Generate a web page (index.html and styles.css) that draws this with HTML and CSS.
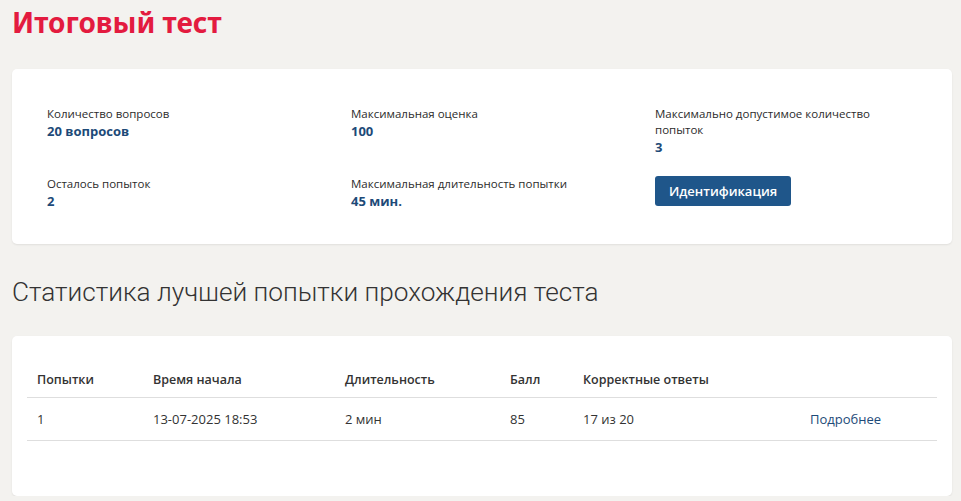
FILE: index.html
```html
<!DOCTYPE html>
<html lang="ru">
<head>
  <meta charset="UTF-8">
  <meta name="viewport" content="width=device-width, initial-scale=1.0">
  <title>Итоговый тест</title>
  <link rel="stylesheet" href="styles.css">
</head>
<body>
  <h1 class="page-title">Итоговый тест</h1>

  <div class="card info-card">
    <div class="info-grid">
      <div class="info-item">
        <div class="info-label">Количество вопросов</div>
        <div class="info-value">20 вопросов</div>
      </div>
      <div class="info-item">
        <div class="info-label">Максимальная оценка</div>
        <div class="info-value">100</div>
      </div>
      <div class="info-item">
        <div class="info-label">Максимально допустимое количество попыток</div>
        <div class="info-value">3</div>
      </div>
      <div class="info-item">
        <div class="info-label">Осталось попыток</div>
        <div class="info-value">2</div>
      </div>
      <div class="info-item">
        <div class="info-label">Максимальная длительность попытки</div>
        <div class="info-value">45 мин.</div>
      </div>
      <div class="info-item">
        <button class="btn">Идентификация</button>
      </div>
    </div>
  </div>

  <h2 class="section-title">Статистика лучшей попытки прохождения теста</h2>

  <div class="card stats-card">
    <table class="stats">
      <thead>
        <tr>
          <th class="col-num">Попытки</th>
          <th class="col-start">Время начала</th>
          <th class="col-dur">Длительность</th>
          <th class="col-score">Балл</th>
          <th class="col-correct">Корректные ответы</th>
          <th></th>
        </tr>
      </thead>
      <tbody>
        <tr>
          <td>1</td>
          <td>13-07-2025 18:53</td>
          <td>2 мин</td>
          <td>85</td>
          <td>17 из 20</td>
          <td><a href="#" class="more-link">Подробнее</a></td>
        </tr>
      </tbody>
    </table>
  </div>
</body>
</html>
```

FILE: styles.css
```css
:root {
  --page-bg: #f3f2ef;
  --red: #e31b3f;
  --blue: #1f568a;
  --navy: #1d4a78;
  --text: #333333;
  --line: #dedede;
}

body {
  margin: 0;
  padding: 0 9px 0 12px;
  background-color: var(--page-bg);
  font-family: "Open Sans", "Noto Sans", Arial, sans-serif;
  font-size: 13px;
  color: var(--text);
}

.page-title {
  margin: 0;
  padding-top: 4px;
  height: 65px;
  font-family: "Noto Sans", Arial, sans-serif;
  font-size: 28px;
  font-weight: 700;
  line-height: 36px;
  color: var(--red);
}

.card {
  background-color: #ffffff;
  border-radius: 5px;
  box-shadow: 0 1px 2px rgba(0, 0, 0, 0.08);
}

.info-card {
  height: 175px;
  box-sizing: border-box;
  padding: 37px 0 0 35px;
}

.info-grid {
  display: grid;
  grid-template-columns: 304px 304px 230px;
  grid-template-rows: 70px 60px;
}

.info-label {
  font-size: 11.5px;
  line-height: 16px;
  color: #2b2b2b;
}

.info-value {
  font-size: 13px;
  font-weight: 700;
  line-height: 18px;
  color: var(--navy);
}

.btn {
  height: 30px;
  padding: 0 14px;
  border: none;
  border-radius: 3px;
  background-color: var(--blue);
  color: #ffffff;
  font-family: inherit;
  font-size: 13px;
  font-weight: 600;
  cursor: pointer;
}

.section-title {
  margin: 0;
  padding-top: 28px;
  height: 70px;
  box-sizing: border-box;
  font-family: Roboto, "Open Sans", sans-serif;
  font-size: 26.2px;
  font-weight: 300;
  line-height: 40px;
  color: #333333;
}

.stats-card {
  margin-top: 22px;
  height: 160px;
  box-sizing: border-box;
  padding: 25px 15px 0;
}

.stats {
  width: 100%;
  border-collapse: collapse;
}

.stats th,
.stats td {
  padding: 0 10px;
  text-align: left;
  font-size: 13px;
  color: var(--text);
}

.stats th {
  height: 36px;
  font-size: 12.5px;
  font-weight: 600;
  border-bottom: 1px solid var(--line);
}

.stats td {
  height: 42px;
  border-bottom: 1px solid var(--line);
}

.col-num { width: 96px; }
.col-start { width: 172px; }
.col-dur { width: 145px; }
.col-score { width: 53px; }
.col-correct { width: 207px; }

.more-link {
  color: var(--navy);
  text-decoration: none;
}
```
